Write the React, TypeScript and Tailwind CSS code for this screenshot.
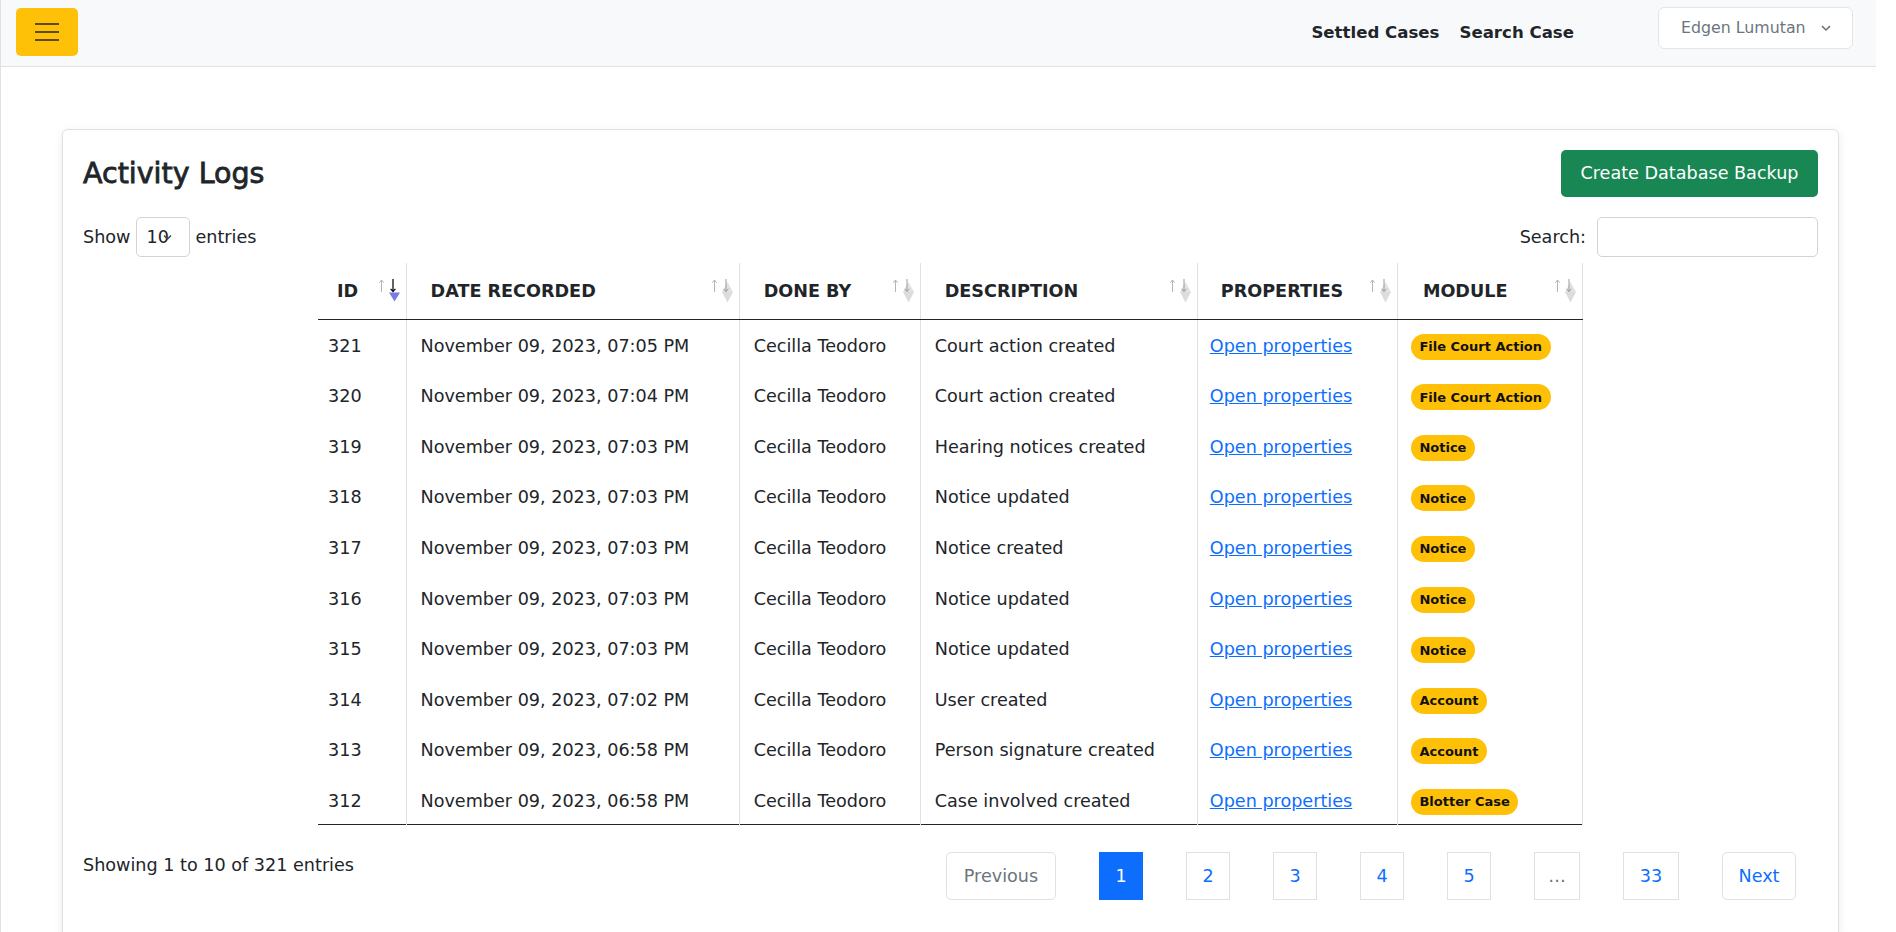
import React from 'react';

const rows = [
  { id: 321, date: 'November 09, 2023, 07:05 PM', desc: 'Court action created', module: 'File Court Action' },
  { id: 320, date: 'November 09, 2023, 07:04 PM', desc: 'Court action created', module: 'File Court Action' },
  { id: 319, date: 'November 09, 2023, 07:03 PM', desc: 'Hearing notices created', module: 'Notice' },
  { id: 318, date: 'November 09, 2023, 07:03 PM', desc: 'Notice updated', module: 'Notice' },
  { id: 317, date: 'November 09, 2023, 07:03 PM', desc: 'Notice created', module: 'Notice' },
  { id: 316, date: 'November 09, 2023, 07:03 PM', desc: 'Notice updated', module: 'Notice' },
  { id: 315, date: 'November 09, 2023, 07:03 PM', desc: 'Notice updated', module: 'Notice' },
  { id: 314, date: 'November 09, 2023, 07:02 PM', desc: 'User created', module: 'Account' },
  { id: 313, date: 'November 09, 2023, 06:58 PM', desc: 'Person signature created', module: 'Account' },
  { id: 312, date: 'November 09, 2023, 06:58 PM', desc: 'Case involved created', module: 'Blotter Case' },
];

const columns = [
  { label: 'ID', width: 'w-[88px]', pad: 'pl-[19px]' },
  { label: 'DATE RECORDED', width: 'w-[333px]', pad: 'pl-[24px]' },
  { label: 'DONE BY', width: 'w-[181px]', pad: 'pl-[24px]' },
  { label: 'DESCRIPTION', width: 'w-[277px]', pad: 'pl-[24px]' },
  { label: 'PROPERTIES', width: 'w-[200px]', pad: 'pl-[23px]' },
  { label: 'MODULE', width: 'w-[185px]', pad: 'pl-[25px]' },
];

function SortIcon({ active }: { active?: boolean }) {
  return (
    <svg className="absolute right-[6px] top-[16px]" width="21" height="25" viewBox="0 0 21 25">
      {active ? (
        <polygon points="10,13.5 21,13.5 15.5,22.5" fill="#7a7ae6" />
      ) : (
        <>
          <polygon points="10,13 21,13 15.5,3" fill="#e2e2e2" />
          <polygon points="10,13 21,13 15.5,23.5" fill="#dcdcdc" />
        </>
      )}
      <g fill="none" strokeWidth="1">
        <path d="M2.5 13V1 M0.3 3.8 L2.5 1 L4.7 3.8" stroke="#b5b5b5" />
        <path
          d="M14 0V12.5 M11.6 9.8 L14 12.6 L16.4 9.8"
          stroke={active ? '#111111' : '#9a9a9a'}
          strokeWidth={active ? 1.3 : 1}
        />
      </g>
    </svg>
  );
}

function Badge({ text }: { text: string }) {
  return (
    <span className="inline-flex h-[26px] items-center rounded-full bg-[#ffc107] px-[8.5px] text-[13px] font-bold leading-none text-[#111]">
      {text}
    </span>
  );
}

function PageButton({ label, active, disabled, w, rounded }: { label: string; active?: boolean; disabled?: boolean; w: string; rounded?: boolean }) {
  return (
    <button
      className={`${w} flex h-[48px] items-center justify-center border text-[17.6px] ${rounded ? 'rounded-[5px]' : ''} ${
        active
          ? 'border-[#0d6efd] bg-[#0d6efd] text-white'
          : disabled
          ? 'border-[#dee2e6] bg-white text-[#6c757d]'
          : 'border-[#dee2e6] bg-white text-[#0d6efd]'
      }`}
    >
      {label}
    </button>
  );
}

export default function App() {
  return (
    <div className="min-h-[932px] w-[1896px] bg-white font-['DejaVu_Sans',sans-serif] text-[#212529]">
      <div className="w-[1876px] border-l border-[#dee2e6] min-h-[932px]">
        {/* Navbar */}
        <nav className="flex h-[67px] items-start border-b border-[#dee2e6] bg-[#f8f9fa] pl-[15px] pr-[23px]">
          <button className="mt-[8px] flex h-[48px] w-[62px] flex-col items-center justify-center gap-[6px] rounded-[5px] bg-[#ffc107]">
            <span className="h-[2px] w-[24px] bg-[#5e4b12]" />
            <span className="h-[2px] w-[24px] bg-[#5e4b12]" />
            <span className="h-[2px] w-[24px] bg-[#5e4b12]" />
          </button>
          <div className="ml-auto mt-[21px] flex gap-[20px] text-[16.6px] font-bold leading-[24px] text-[#212529]">
            <a>Settled Cases</a>
            <a>Search Case</a>
          </div>
          <button className="ml-[84px] mt-[7px] flex h-[42px] w-[195px] items-center rounded-[6px] border border-[#e3e5e8] bg-white pl-[22px] text-[15.8px] text-[#6c757d]">
            Edgen Lumutan
            <svg className="ml-[15px]" width="10" height="7" viewBox="0 0 10 7">
              <path d="M1 1.2 L5 5 L9 1.2" fill="none" stroke="#6c757d" strokeWidth="1.6" />
            </svg>
          </button>
        </nav>

        {/* Card */}
        <div className="ml-[61px] mt-[62px] w-[1777px] rounded-[6px] border border-[#dfe1e4] bg-white px-[20px] pb-[40px] pt-[20px] shadow-[0_2px_10px_rgba(0,0,0,0.08)]">
          <div className="flex items-center justify-between">
            <h3 className="text-[28.5px] leading-[34px] [-webkit-text-stroke:0.8px_#212529]">Activity Logs</h3>
            <button className="h-[47px] w-[257px] rounded-[5px] bg-[#198754] text-[17.6px] text-white">
              Create Database Backup
            </button>
          </div>

          <div className="mt-[20px] flex h-[40px] items-center justify-between text-[17.6px]">
            <div className="flex items-center">
              <span>Show</span>
              <div className="relative ml-[6px] flex h-[40px] w-[54px] items-center rounded-[5px] border border-[#ced4da] pl-[9px]">
                <span>10</span>
                <svg className="absolute left-[26px] top-[16px]" width="9" height="7" viewBox="0 0 9 7">
                  <path d="M1 1.5 L4.5 5 L8 1.5" fill="none" stroke="#444" strokeWidth="1.5" />
                </svg>
              </div>
              <span className="ml-[5px]">entries</span>
            </div>
            <div className="flex items-center">
              <span>Search:</span>
              <input className="ml-[11px] h-[40px] w-[221px] rounded-[5px] border border-[#ced4da] bg-white outline-none" />
            </div>
          </div>

          <table className="mx-auto mt-[6px] w-[1265px] table-fixed border-collapse text-[17.6px]">
            <thead>
              <tr>
                {columns.map((c, i) => (
                  <th
                    key={c.label}
                    className={`${c.width} ${c.pad} relative h-[56px] border-b border-[#212529] text-left font-bold ${
                      i > 0 ? 'border-l border-l-[#dee2e6]' : ''
                    } ${i === columns.length - 1 ? 'border-r border-r-[#dee2e6]' : ''}`}
                  >
                    {c.label}
                    <SortIcon active={i === 0} />
                  </th>
                ))}
              </tr>
            </thead>
            <tbody>
              {rows.map((r, ri) => (
                <tr key={r.id} className={`h-[50.6px] ${ri === rows.length - 1 ? 'border-b border-[#212529]' : ''}`}>
                  <td className="pl-[10px] pt-[3px]">{r.id}</td>
                  <td className="border-l border-[#dee2e6] pl-[14px] pt-[3px]">{r.date}</td>
                  <td className="border-l border-[#dee2e6] pl-[14px] pt-[3px]">Cecilla Teodoro</td>
                  <td className="border-l border-[#dee2e6] pl-[14px] pt-[3px]">{r.desc}</td>
                  <td className="border-l border-[#dee2e6] pl-[12px] pt-[3px]">
                    <a className="text-[#0d6efd] underline" href="#">
                      Open properties
                    </a>
                  </td>
                  <td className="border-x border-[#dee2e6] pl-[13px] pt-[3px]">
                    <Badge text={r.module} />
                  </td>
                </tr>
              ))}
            </tbody>
          </table>

          <div className="mt-[27px] flex items-start justify-between pr-[22px]">
            <div className="text-[17.6px] leading-[26px]">Showing 1 to 10 of 321 entries</div>
            <div className="flex gap-[43px]">
              <PageButton label="Previous" disabled w="w-[110px]" rounded />
              <PageButton label="1" active w="w-[44px]" />
              <PageButton label="2" w="w-[44px]" />
              <PageButton label="3" w="w-[44px]" />
              <PageButton label="4" w="w-[44px]" />
              <PageButton label="5" w="w-[44px]" />
              <div className="flex h-[48px] w-[46px] items-center justify-center border border-[#dee2e6] text-[17.6px] text-[#6c757d]">
                …
              </div>
              <PageButton label="33" w="w-[56px]" />
              <PageButton label="Next" w="w-[74px]" rounded />
            </div>
          </div>
        </div>
      </div>
    </div>
  );
}
